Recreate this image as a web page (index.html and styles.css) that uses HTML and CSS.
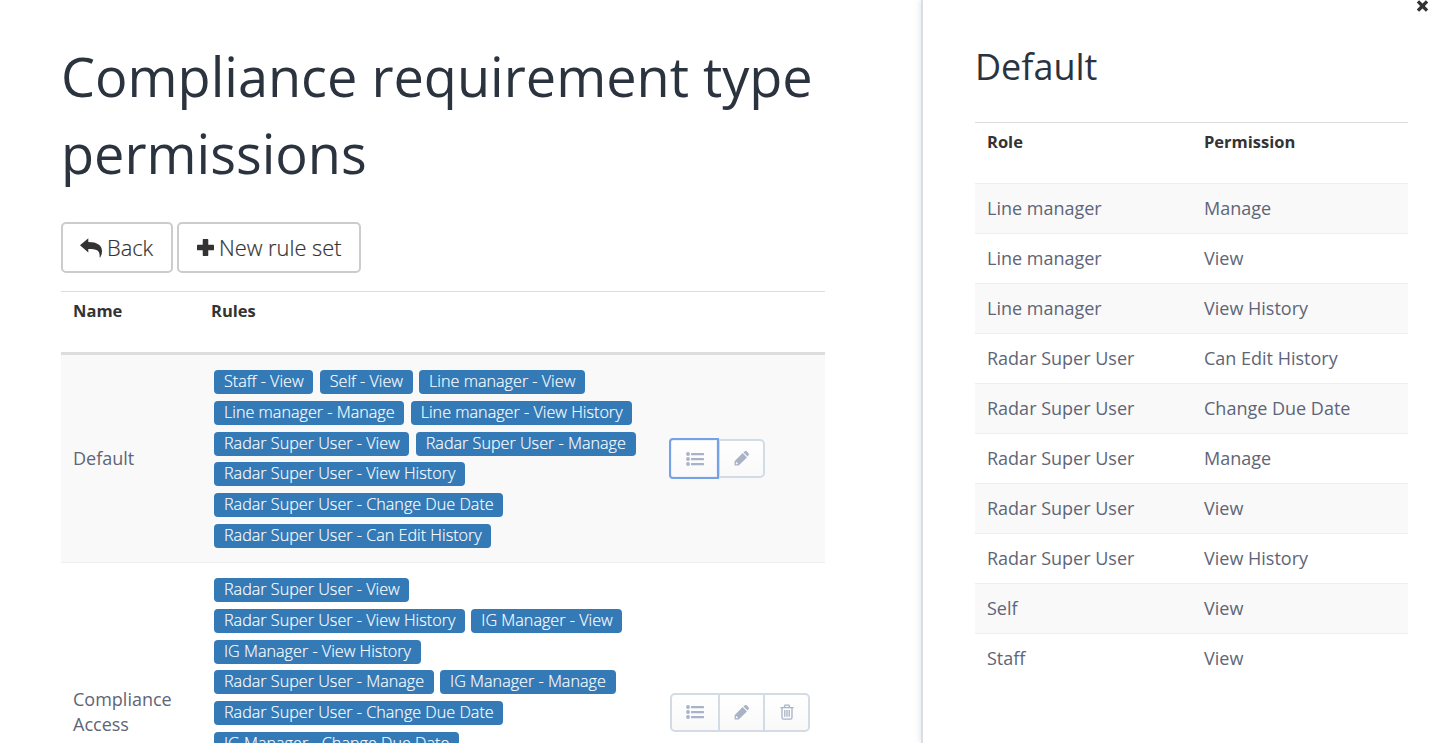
FILE: index.html
```html
<!DOCTYPE html>
<html lang="en">
<head>
<meta charset="utf-8">
<title>Compliance requirement type permissions</title>
<link rel="stylesheet" href="styles.css">
</head>
<body>
<svg class="defs" width="0" height="0">
  <symbol id="list" viewBox="0 0 18 14"><circle cx="2" cy="2" r="1.9"/><circle cx="2" cy="7" r="1.9"/><circle cx="2" cy="12" r="1.9"/><rect x="5" y="1" width="13" height="2.2" rx=".5"/><rect x="5" y="6" width="13" height="2.2" rx=".5"/><rect x="5" y="11" width="13" height="2.2" rx=".5"/></symbol>
  <symbol id="pencil" viewBox="0 0 16 16"><path fill-rule="evenodd" d="M.6 15.4V11L9.2 2.2L13.8 6.8L5 15.4ZM2 12.6V14H3.4L4.2 13.2L2.8 11.8Z"/><path d="M10.1 1.5L11.2.5Q12.1-.3 13-.1Q13.5.1 15.5 2.4Q16.4 3.4 15.5 4.5L14.5 5.8Z"/></symbol>
  <symbol id="trash" viewBox="0 0 14 16"><path fill="none" stroke="currentColor" stroke-width="1.3" d="M.4 3.6H13.6M4.3 3.3L5 1.2H9L9.7 3.3M2 3.8V13.4Q2 15.2 3.6 15.2H10.4Q12 15.2 12 13.4V3.8M4.8 6V12.8M7 6V12.8M9.2 6V12.8"/></symbol>
</svg>
<div class="page">
  <main class="main">
    <h1 class="title">Compliance requirement type permissions</h1>
    <div class="toolbar">
      <button class="btn btn-back"><svg class="icon-reply" viewBox="0 0 22 20"><path d="M0 7.3L8.3.2V4.1C17.5 4.1 22 7.5 22 13.2Q22 16.2 20.3 19.2C20 19.8 19.5 19.6 19.6 19C20.1 12.5 17.4 10.9 8.3 10.9V14.5Z"/></svg><span class="btn-text">Back</span></button>
      <button class="btn btn-new"><svg class="icon-plus" viewBox="0 0 16 16"><path d="M6 0H10Q10.6 0 10.6.7V5.4H15.3Q16 5.4 16 6V10Q16 10.6 15.3 10.6H10.6V15.3Q10.6 16 10 16H6Q5.4 16 5.4 15.3V10.6H.7Q0 10.6 0 10V6Q0 5.4.7 5.4H5.4V.7Q5.4 0 6 0Z"/></svg><span class="btn-text">New rule set</span></button>
    </div>
    <div class="rules-table">
      <div class="row head"><div class="th">Name</div><div class="th">Rules</div></div>
      <div class="row first">
        <div class="name">Default</div>
        <div class="labels">
          <span class="label">Staff - View</span><span class="label">Self - View</span><span class="label">Line manager - View</span><span class="label">Line manager - Manage</span><span class="label">Line manager - View History</span><span class="label">Radar Super User - View</span><span class="label">Radar Super User - Manage</span><span class="label">Radar Super User - View History</span><span class="label">Radar Super User - Change Due Date</span><span class="label">Radar Super User - Can Edit History</span>
        </div>
        <div class="actions">
          <button class="act wide focused"><svg class="i-list"><use href="#list"/></svg></button><button class="act"><svg class="i-pencil"><use href="#pencil"/></svg></button>
        </div>
      </div>
      <div class="row second">
        <div class="name">Compliance Access</div>
        <div class="labels">
          <span class="label">Radar Super User - View</span><span class="label">Radar Super User - View History</span><span class="label">IG Manager - View</span><span class="label">IG Manager - View History</span><span class="label">Radar Super User - Manage</span><span class="label">IG Manager - Manage</span><span class="label">Radar Super User - Change Due Date</span><span class="label">IG Manager - Change Due Date</span>
        </div>
        <div class="actions">
          <button class="act wide"><svg class="i-list"><use href="#list"/></svg></button><button class="act"><svg class="i-pencil"><use href="#pencil"/></svg></button><button class="act"><svg class="i-trash"><use href="#trash"/></svg></button>
        </div>
      </div>
    </div>
  </main>
  <aside class="panel">
    <svg class="close" viewBox="0 0 12 12"><path d="M2.6.3L6 3.6L9.4.3L11.7 2.6L8.4 6L11.7 9.4L9.4 11.7L6 8.4L2.6 11.7L.3 9.4L3.6 6L.3 2.6Z"/></svg>
    <h2 class="panel-title">Default</h2>
    <div class="perms">
      <div class="perm perm-head"><div class="th">Role</div><div class="th">Permission</div></div>
      <div class="perm"><div>Line manager</div><div>Manage</div></div>
      <div class="perm"><div>Line manager</div><div>View</div></div>
      <div class="perm"><div>Line manager</div><div>View History</div></div>
      <div class="perm"><div>Radar Super User</div><div>Can Edit History</div></div>
      <div class="perm"><div>Radar Super User</div><div>Change Due Date</div></div>
      <div class="perm"><div>Radar Super User</div><div>Manage</div></div>
      <div class="perm"><div>Radar Super User</div><div>View</div></div>
      <div class="perm"><div>Radar Super User</div><div>View History</div></div>
      <div class="perm"><div>Self</div><div>View</div></div>
      <div class="perm"><div>Staff</div><div>View</div></div>
    </div>
  </aside>
</div>
</body>
</html>
```
FILE: styles.css
```css
* { box-sizing: border-box; }
body {
  margin: 0;
  font-family: "Open Sans", sans-serif;
  font-size: 18px;
  color: #5e6577;
  background: #fff;
}
.defs { position: absolute; }
svg { fill: currentColor; display: block; }
.page { display: flex; height: 743px; overflow: hidden; }
.main { width: 921px; padding: 38px 96px 0 61px; flex: none; }
.title {
  margin: 0;
  font-weight: 400;
  font-size: 54.05px;
  line-height: 77px;
  color: #2b333f;
}
.toolbar { display: flex; gap: 4px; margin-top: 30px; }
.btn {
  display: flex;
  align-items: center;
  height: 51px;
  padding: 0 0 0 17px;
  background: #fff;
  border: 2px solid #ccc;
  border-radius: 5px;
  font: 300 21.8px "Open Sans", sans-serif;
  color: #333;
}
.btn-back { width: 112px; }
.btn-new { width: 184px; padding-left: 18px; }
.btn-text { padding-bottom: 1px; -webkit-text-stroke: .2px currentColor; }
.icon-reply { width: 22px; height: 20px; margin-right: 5px; }
.icon-plus { width: 17px; height: 17px; margin-right: 5px; }
.rules-table { width: 764px; margin-top: 18px; border-top: 1px solid #ddd; }
.row { display: grid; grid-template-columns: 138px 458px 168px; }
.head { height: 63px; border-bottom: 3px solid #ddd; }
.th { padding: 7px 12px 0; font-weight: 700; font-size: 16.5px; line-height: 23px; color: #333; }
.first { height: 208px; align-items: center; background: #f9f9f9; border-bottom: 1px solid #edeff1; }
.second { height: 298px; align-items: center; }
.name { padding: 0 12px; line-height: 25px; }
.labels {
  display: flex;
  flex-wrap: wrap;
  align-self: start;
  align-content: flex-start;
  width: 443px;
  padding: 15.4px 0 0 15px;
  gap: 6.65px 6.3px;
}
.label {
  height: 24px;
  padding: 0 9.7px 0 10px;
  background: #337ab7;
  border-radius: 4px;
  color: #fff;
  font-size: 16.18px;
  font-weight: 300;
  line-height: 23px;
  white-space: nowrap;
  -webkit-text-stroke: .15px currentColor;
}
.actions { display: flex; padding-left: 13px; }
.act {
  display: flex;
  align-items: center;
  justify-content: center;
  width: 47px;
  height: 39px;
  margin-left: -1px;
  padding: 0;
  border: 2px solid #d3dce5;
  background: linear-gradient(#fff, #f9f9f9);
  color: #a8b3c7;
}
.act.wide { width: 50px; margin: 0 -1px 0 0; border-radius: 5px 0 0 5px; }
.act + .act + .act { margin-left: -2px; }
.act:last-child { border-radius: 0 5px 5px 0; }
.act.focused {
  width: 48px;
  margin-right: 1px;
  padding-left: 2px;
  border-radius: 3px 0 0 3px;
  outline: 2px solid #75a1e6;
  outline-offset: -1px;
  border-color: #edf1f7;
  z-index: 1;
}
.i-list { width: 18px; height: 14px; }
.i-pencil { width: 15px; height: 15px; }
.i-trash { width: 14px; height: 16px; }
.panel {
  position: relative;
  flex: 1;
  padding: 42px 30px 0 52px;
  border-left: 2px solid #d8dee4;
  box-shadow: -2px 0 5px rgba(80, 100, 120, .12);
}
.close { position: absolute; top: 0; right: 9px; width: 13px; height: 12px; color: #333; }
.panel-title { margin: 0; font-size: 36px; font-weight: 400; line-height: 50px; color: #2b333f; }
.perms { margin-top: 30px; border-top: 1px solid #ddd; }
.perm {
  display: grid;
  grid-template-columns: 217px 216px;
  height: 50px;
  line-height: 49px;
  border-top: 1px solid #edeff1;
}
.perm > div { padding-left: 12px; }
.perm:nth-child(even) { background: #f9f9f9; }
.perm-head { height: 60px; border-top: 0; }
.perm-head > .th { line-height: 23px; }
```
